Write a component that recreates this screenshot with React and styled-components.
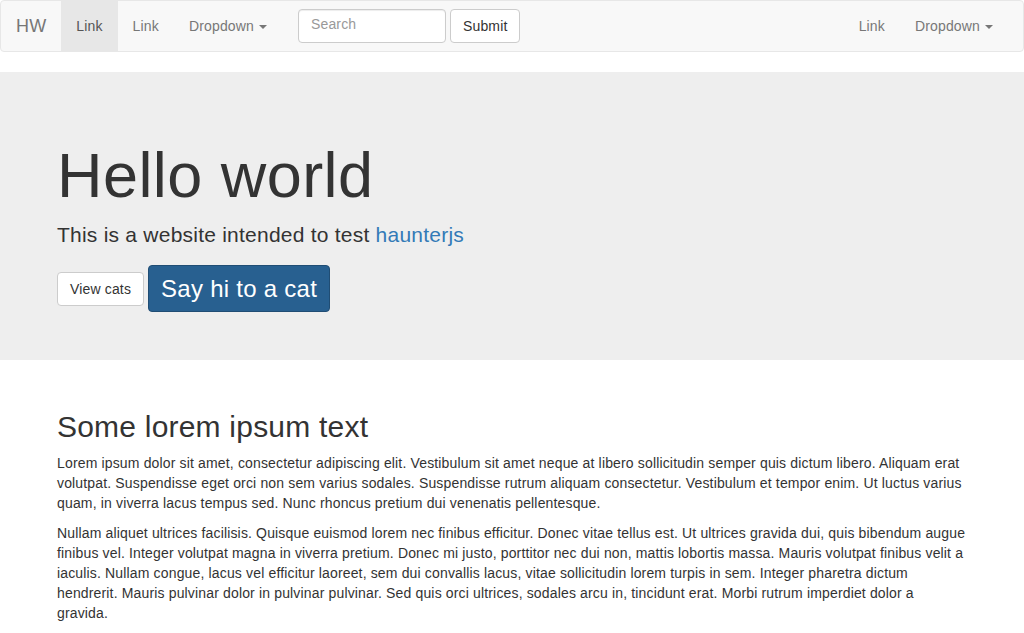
import React from 'react'
import styled, { createGlobalStyle } from 'styled-components'

const GlobalStyle = createGlobalStyle`
  * { box-sizing: border-box; }
  html, body { margin: 0; padding: 0; background: #fff; }
  body {
    font-family: "Liberation Sans", Arial, Helvetica, sans-serif;
    font-size: 14px;
    line-height: 1.42857143;
    letter-spacing: 0.011em;
    color: #333;
  }
`

const Navbar = styled.nav`
  display: flex;
  align-items: stretch;
  justify-content: space-between;
  height: 52px;
  background: #f8f8f8;
  border: 1px solid #e7e7e7;
  border-radius: 4px;
  margin-bottom: 20px;
  padding-right: 15px;
`

const NavGroup = styled.div`
  display: flex;
  align-items: stretch;
`

const Brand = styled.a`
  display: block;
  padding: 15px;
  height: 50px;
  font-size: 18px;
  line-height: 20px;
  color: #777;
  text-decoration: none;
`

const NavLink = styled.a`
  display: block;
  padding: 15px;
  line-height: 20px;
  font-size: 14px;
  color: ${props => props.active ? '#555' : '#777'};
  background: ${props => props.active ? '#e7e7e7' : 'transparent'};
  text-decoration: none;
  white-space: nowrap;
`

const Caret = styled.span`
  display: inline-block;
  width: 0;
  height: 0;
  margin-left: 5px;
  vertical-align: middle;
  border-top: 4px solid #777;
  border-left: 4px solid transparent;
  border-right: 4px solid transparent;
`

const NavForm = styled.form`
  display: flex;
  align-items: center;
  gap: 4px;
  padding: 0 15px 0 16px;
`

const Input = styled.input`
  width: 148px;
  height: 34px;
  padding: 4px 12px 8px;
  font-family: inherit;
  font-size: 14px;
  letter-spacing: 0.011em;
  color: #555;
  background: #fff;
  border: 1px solid #ccc;
  border-radius: 4px;
  box-shadow: inset 0 1px 1px rgba(0, 0, 0, .075);
  outline: none;
  &::placeholder { color: #999; }
`

const Button = styled.button`
  display: inline-block;
  font-family: inherit;
  letter-spacing: 0.011em;
  font-size: ${props => props.large ? '24px' : '14px'};
  line-height: ${props => props.large ? '33px' : '20px'};
  padding: 6px 12px;
  border-radius: 4px;
  border: 1px solid ${props => props.primary ? '#204d74' : '#ccc'};
  background: ${props => props.primary ? '#286090' : '#fff'};
  color: ${props => props.primary ? '#fff' : '#333'};
  cursor: pointer;
  white-space: nowrap;
`

const Jumbotron = styled.div`
  background: #eee;
  padding: 48px 0;
`

const Container = styled.div`
  max-width: 940px;
  margin: 0 auto;
  padding: 0 15px;
`

const Title = styled.h1`
  margin: 21px 0 10px;
  font-size: 63px;
  line-height: 1.1;
  font-weight: 500;
  letter-spacing: 0.007em;
  color: #333;
`

const Lead = styled.p`
  margin: 0 0 15px;
  font-size: 21px;
  line-height: 30px;
  font-weight: 200;
  letter-spacing: 0.011em;
`

const Link = styled.a`
  color: #337ab7;
  text-decoration: none;
`

const Actions = styled.div`
  display: flex;
  align-items: center;
  gap: 4px;
`

const Content = styled.div`
  padding-top: 30px;
`

const Heading = styled.h2`
  margin: 20px 0 10px;
  font-size: 30px;
  line-height: 1.1;
  font-weight: 500;
  letter-spacing: 0.007em;
`

const Para = styled.p`
  margin: 0 0 10px;
`

export default function App() {
  return (
    <>
      <GlobalStyle />
      <Navbar>
        <NavGroup>
          <Brand href="#">HW</Brand>
          <NavLink href="#" active>Link</NavLink>
          <NavLink href="#">Link</NavLink>
          <NavLink href="#">Dropdown<Caret /></NavLink>
          <NavForm onSubmit={e => e.preventDefault()}>
            <Input type="text" placeholder="Search" />
            <Button type="submit">Submit</Button>
          </NavForm>
        </NavGroup>
        <NavGroup>
          <NavLink href="#">Link</NavLink>
          <NavLink href="#">Dropdown<Caret /></NavLink>
        </NavGroup>
      </Navbar>

      <Jumbotron>
        <Container>
          <Title>Hello world</Title>
          <Lead>This is a website intended to test <Link href="#">haunterjs</Link></Lead>
          <Actions>
            <Button>View cats</Button>
            <Button primary large>Say hi to a cat</Button>
          </Actions>
        </Container>
      </Jumbotron>

      <Container>
        <Content>
          <Heading>Some lorem ipsum text</Heading>
          <Para>
            Lorem ipsum dolor sit amet, consectetur adipiscing elit. Vestibulum sit amet neque at libero sollicitudin semper quis dictum libero. Aliquam erat volutpat. Suspendisse eget orci non sem varius sodales. Suspendisse rutrum aliquam consectetur. Vestibulum et tempor enim. Ut luctus varius quam, in viverra lacus tempus sed. Nunc rhoncus pretium dui venenatis pellentesque.
          </Para>
          <Para>
            Nullam aliquet ultrices facilisis. Quisque euismod lorem nec finibus efficitur. Donec vitae tellus est. Ut ultrices gravida dui, quis bibendum augue finibus vel. Integer volutpat magna in viverra pretium. Donec mi justo, porttitor nec dui non, mattis lobortis massa. Mauris volutpat finibus velit a iaculis. Nullam congue, lacus vel efficitur laoreet, sem dui convallis lacus, vitae sollicitudin lorem turpis in sem. Integer pharetra dictum hendrerit. Mauris pulvinar dolor in pulvinar pulvinar. Sed quis orci ultrices, sodales arcu in, tincidunt erat. Morbi rutrum imperdiet dolor a gravida.
          </Para>
        </Content>
      </Container>
    </>
  )
}
